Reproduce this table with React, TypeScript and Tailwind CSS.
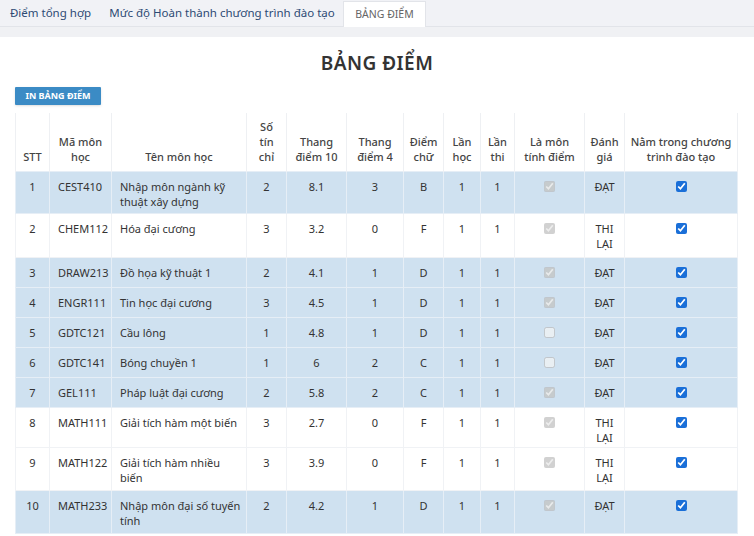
import React from 'react';

type Row = {
  stt: number;
  ma: string;
  ten: string;
  tc: number;
  d10: string;
  d4: number;
  chu: string;
  tinhDiem: boolean;
  danhGia: string;
  h: string;
};

const rows: Row[] = [
  { stt: 1, ma: 'CEST410', ten: 'Nhập môn ngành kỹ thuật xây dựng', tc: 2, d10: '8.1', d4: 3, chu: 'B', tinhDiem: true, danhGia: 'ĐẠT', h: 'h-[42px]' },
  { stt: 2, ma: 'CHEM112', ten: 'Hóa đại cương', tc: 3, d10: '3.2', d4: 0, chu: 'F', tinhDiem: true, danhGia: 'THI LẠI', h: 'h-[44px]' },
  { stt: 3, ma: 'DRAW213', ten: 'Đồ họa kỹ thuật 1', tc: 2, d10: '4.1', d4: 1, chu: 'D', tinhDiem: true, danhGia: 'ĐẠT', h: 'h-[30px]' },
  { stt: 4, ma: 'ENGR111', ten: 'Tin học đại cương', tc: 3, d10: '4.5', d4: 1, chu: 'D', tinhDiem: true, danhGia: 'ĐẠT', h: 'h-[30px]' },
  { stt: 5, ma: 'GDTC121', ten: 'Cầu lông', tc: 1, d10: '4.8', d4: 1, chu: 'D', tinhDiem: false, danhGia: 'ĐẠT', h: 'h-[30px]' },
  { stt: 6, ma: 'GDTC141', ten: 'Bóng chuyền 1', tc: 1, d10: '6', d4: 2, chu: 'C', tinhDiem: false, danhGia: 'ĐẠT', h: 'h-[30px]' },
  { stt: 7, ma: 'GEL111', ten: 'Pháp luật đại cương', tc: 2, d10: '5.8', d4: 2, chu: 'C', tinhDiem: true, danhGia: 'ĐẠT', h: 'h-[30px]' },
  { stt: 8, ma: 'MATH111', ten: 'Giải tích hàm một biến', tc: 3, d10: '2.7', d4: 0, chu: 'F', tinhDiem: true, danhGia: 'THI LẠI', h: 'h-[40px]' },
  { stt: 9, ma: 'MATH122', ten: 'Giải tích hàm nhiều biến', tc: 3, d10: '3.9', d4: 0, chu: 'F', tinhDiem: true, danhGia: 'THI LẠI', h: 'h-[43px]' },
  { stt: 10, ma: 'MATH233', ten: 'Nhập môn đại số tuyến tính', tc: 2, d10: '4.2', d4: 1, chu: 'D', tinhDiem: true, danhGia: 'ĐẠT', h: 'h-[43px]' },
];

// header labels, one entry per printed line
const headers: string[][] = [
  ['STT'],
  ['Mã môn', 'học'],
  ['Tên môn học'],
  ['Số', 'tín', 'chỉ'],
  ['Thang', 'điểm 10'],
  ['Thang', 'điểm 4'],
  ['Điểm', 'chữ'],
  ['Lần', 'học'],
  ['Lần', 'thi'],
  ['Là môn', 'tính điểm'],
  ['Đánh', 'giá'],
  ['Nằm trong chương', 'trình đào tạo'],
];

const widths = [34, 62, 135, 40, 60, 57, 40, 37, 34, 70, 40, 113];

export default function App() {
  return (
    <div className="w-[754px] h-[536px] overflow-hidden bg-white text-[#333] font-['Noto_Sans',sans-serif]">
      <div className="bg-[#f1f2f6]">
        <div className="flex items-end h-[27px] border-b border-[#e2e4e9] text-[11.5px]">
          <div className="w-[101px] h-full flex items-center justify-center text-[#2d4a74]">Điểm tổng hợp</div>
          <div className="w-[242px] h-full flex items-center justify-center text-[#2d4a74]">Mức độ Hoàn thành chương trình đào tạo</div>
          <div className="w-[83px] h-[26px] mb-[-1px] flex items-center justify-center bg-white border border-b-0 border-[#e2e4e9] text-[#666] text-[10.5px]">BẢNG ĐIỂM</div>
        </div>
        <div className="h-[10px] bg-[#f0f1f4]" />
      </div>

      <h1 className="mt-[14px] text-center text-[19px] font-semibold text-[#333] leading-[24px] tracking-wide">BẢNG ĐIỂM</h1>

      <div className="px-[15px] mt-[6px]">
        <button className="h-[18px] w-[86px] bg-[#3b8bc5] text-white text-[9px] font-bold rounded-[1px] shadow-sm">IN BẢNG ĐIỂM</button>
      </div>

      <div className="px-[15px] mt-[8px]">
        <table className="table-fixed border-collapse w-[722px] text-[11px] leading-[15px]">
          <colgroup>
            {widths.map((w, i) => (
              <col key={i} style={{ width: w }} />
            ))}
          </colgroup>
          <thead>
            <tr className="h-[58px]">
              {headers.map((lines, i) => (
                <th
                  key={i}
                  className="align-bottom text-center font-medium text-[#444] px-0 pb-[7px] border-x border-[#eef0f3]"
                >
                  {lines.map((l, j) => (
                    <div key={j} className="whitespace-nowrap">{l}</div>
                  ))}
                </th>
              ))}
            </tr>
          </thead>
          <tbody>
            {rows.map((r) => {
              const shaded = r.danhGia === 'ĐẠT';
              const bg = shaded ? 'bg-[#cfe1f0]' : 'bg-white';
              const bd = shaded ? 'border-[#e6eef6]' : 'border-[#f0f2f5]';
              const td = `align-top pt-[7px] border ${bd}`;
              return (
                <tr key={r.stt} className={`${bg} ${r.h}`}>
                  <td className={`${td} text-center`}>{r.stt}</td>
                  <td className={`${td} pl-[8px]`}>{r.ma}</td>
                  <td className={`${td} pl-[8px] pr-[1px]`}>{r.ten}</td>
                  <td className={`${td} text-center`}>{r.tc}</td>
                  <td className={`${td} text-center`}>{r.d10}</td>
                  <td className={`${td} text-center`}>{r.d4}</td>
                  <td className={`${td} text-center`}>{r.chu}</td>
                  <td className={`${td} text-center`}>1</td>
                  <td className={`${td} text-center`}>1</td>
                  <td className={`${td} text-center`}>
                    <input
                      type="checkbox"
                      checked={r.tinhDiem}
                      disabled
                      readOnly
                      className="w-[11px] h-[11px] m-0 mt-[2px] align-top"
                    />
                  </td>
                  <td className={`${td} text-center px-[8px]`}>{r.danhGia}</td>
                  <td className={`${td} text-center`}>
                    <input
                      type="checkbox"
                      checked
                      readOnly
                      className="w-[11px] h-[11px] m-0 mt-[2px] align-top accent-[#1a6fd8]"
                    />
                  </td>
                </tr>
              );
            })}
          </tbody>
        </table>
      </div>
    </div>
  );
}
